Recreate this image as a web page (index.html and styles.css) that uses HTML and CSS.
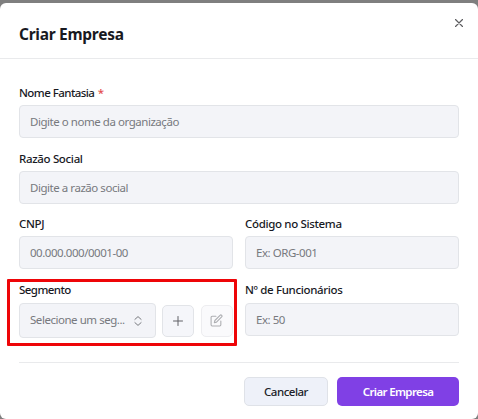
FILE: index.html
```
<!DOCTYPE html>
<html lang="pt-BR">
<head>
<meta charset="utf-8">
<title>Criar Empresa</title>
<link rel="stylesheet" href="styles.css">
</head>
<body>
<main class="modal">
  <header class="modal-header">
    <h1>Criar Empresa</h1>
    <button class="close" aria-label="Fechar"><svg viewBox="0 0 8 8" width="8" height="8"><path d="M.5.5l7 7M7.500.5l-7 7"/></svg></button>
  </header>
  <form class="form">
    <div class="field wide">
      <label>Nome Fantasia <span class="required">*</span></label>
      <div class="control"><span>Digite o nome da organização</span></div>
    </div>
    <div class="field wide">
      <label class="loose">Razão Social</label>
      <div class="control"><span>Digite a razão social</span></div>
    </div>
    <div class="field">
      <label class="loose">CNPJ</label>
      <div class="control"><span>00.000.000/0001-00</span></div>
    </div>
    <div class="field">
      <label class="loose">Código no Sistema</label>
      <div class="control"><span>Ex: ORG-001</span></div>
    </div>
    <div class="field last">
      <label>Segmento</label>
      <div class="segment-row">
        <div class="control select"><span>Selecione um seg...</span>
          <svg viewBox="0 0 8 10" width="8" height="10"><path d="M.9 3.400 4 .6l3.100 2.800M.9 6.600 4 9.400l3.100-2.800"/></svg>
        </div>
        <button type="button" class="square" aria-label="Adicionar"><svg viewBox="0 0 10 10" width="10" height="10"><path d="M5 .5v9M.5 5h9"/></svg></button>
        <button type="button" class="square disabled" aria-label="Editar"><svg viewBox="0 0 24 24" width="13" height="13"><path d="M11 4H4a2 2 0 0 0-2 2v14a2 2 0 0 0 2 2h14a2 2 0 0 0 2-2v-7M18.500 2.500a2.120 2.120 0 0 1 3 3L12 15l-4 1 1-4z"/></svg></button>
      </div>
      <div class="highlight"></div>
    </div>
    <div class="field last">
      <label class="loose">Nº de Funcionários</label>
      <div class="control"><span>Ex: 50</span></div>
    </div>
  </form>
  <footer class="actions">
    <button class="btn cancel">Cancelar</button>
    <button class="btn primary">Criar Empresa</button>
  </footer>
</main>
</body>
</html>
```
FILE: styles.css
```
* { box-sizing: border-box; }
body {
  margin: 0;
  height: 419px;
  padding-top: 3px;
  overflow: hidden;
  background: #7f7f7f;
  font-family: "Noto Sans", "Open Sans", sans-serif;
  color: #18191f;
}
button { font: inherit; padding: 0; margin: 0; }
svg { display: block; fill: none; stroke: currentColor; stroke-linecap: round; stroke-linejoin: round; flex: none; }
.modal { height: 416px; background: #fff; border-radius: 6px; }
.modal-header {
  display: flex;
  justify-content: space-between;
  height: 56px;
  padding: 0 19px;
  border-bottom: 1px solid #e9eaec;
}
h1 { margin: 19px 0 0; font-size: 15.500px; line-height: 24px; font-weight: 700; letter-spacing: -.28px; }
.close { display: flex; align-self: flex-start; width: 10px; height: 10px; margin: 15px -4.500px 0 0; padding: 1px; border: 0; background: none; color: #5d5d60; }
.close svg { stroke-width: 1.200; }
.form {
  display: grid;
  grid-template-columns: 214px 214px;
  column-gap: 12px;
  grid-template-rows: 66px 65px 66px 68px;
  padding: 26px 19px 0;
}
.wide { grid-column: 1 / -1; }
.field { position: relative; min-width: 0; }
label { display: block; height: 16px; margin-bottom: 4px; font-size: 11.500px; line-height: 16px; font-weight: 500; letter-spacing: -.55px; white-space: nowrap; }
label.loose { letter-spacing: -.34px; }
.last label { margin-bottom: 5px; }
.required { color: #e34d4d; margin-left: 1px; }
.control {
  display: flex;
  align-items: center;
  height: 33px;
  padding: 0 10px;
  border: 1px solid #e2e4e8;
  border-radius: 4px;
  background: #f3f4f8;
  color: #77797e;
  font-size: 11.500px;
  letter-spacing: -.46px;
  white-space: nowrap;
}
.last .control { line-height: 16px; }
.segment-row { display: flex; align-items: center; }
.segment-row .select { width: 137px; height: 35px; justify-content: space-between; padding-right: 13px; }
.select span { margin-top: -1px; }
.square {
  display: flex;
  align-items: center;
  justify-content: center;
  width: 32px;
  height: 32px;
  margin-left: 6px;
  border: 1px solid #e2e4e8;
  border-radius: 5px;
  background: #f5f6fa;
  color: #606166;
}
.square.disabled { margin-left: 7px; border-color: #ededf0; background: #fafafc; color: #adaeb2; }
.square.disabled svg { margin-right: 2px; stroke-width: 2; }
.highlight { position: absolute; left: -12px; top: -3px; width: 230px; height: 67px; border: 3px solid #ee0508; border-radius: 1px; }
.actions {
  display: flex;
  justify-content: flex-end;
  gap: 9px;
  margin: 12px 19px 0;
  padding-top: 14px;
  border-top: 1px solid #e9eaec;
}
.btn { height: 29px; border-radius: 5px; font-size: 11.500px; font-weight: 500; letter-spacing: -.5px; }
.cancel { width: 84px; border: 1px solid #dfe2e8; background: #eef1f9; color: #202127; }
.primary { width: 122px; border: 0; background: #8040e5; color: #fff; font-weight: 600; letter-spacing: -.64px; }
```
